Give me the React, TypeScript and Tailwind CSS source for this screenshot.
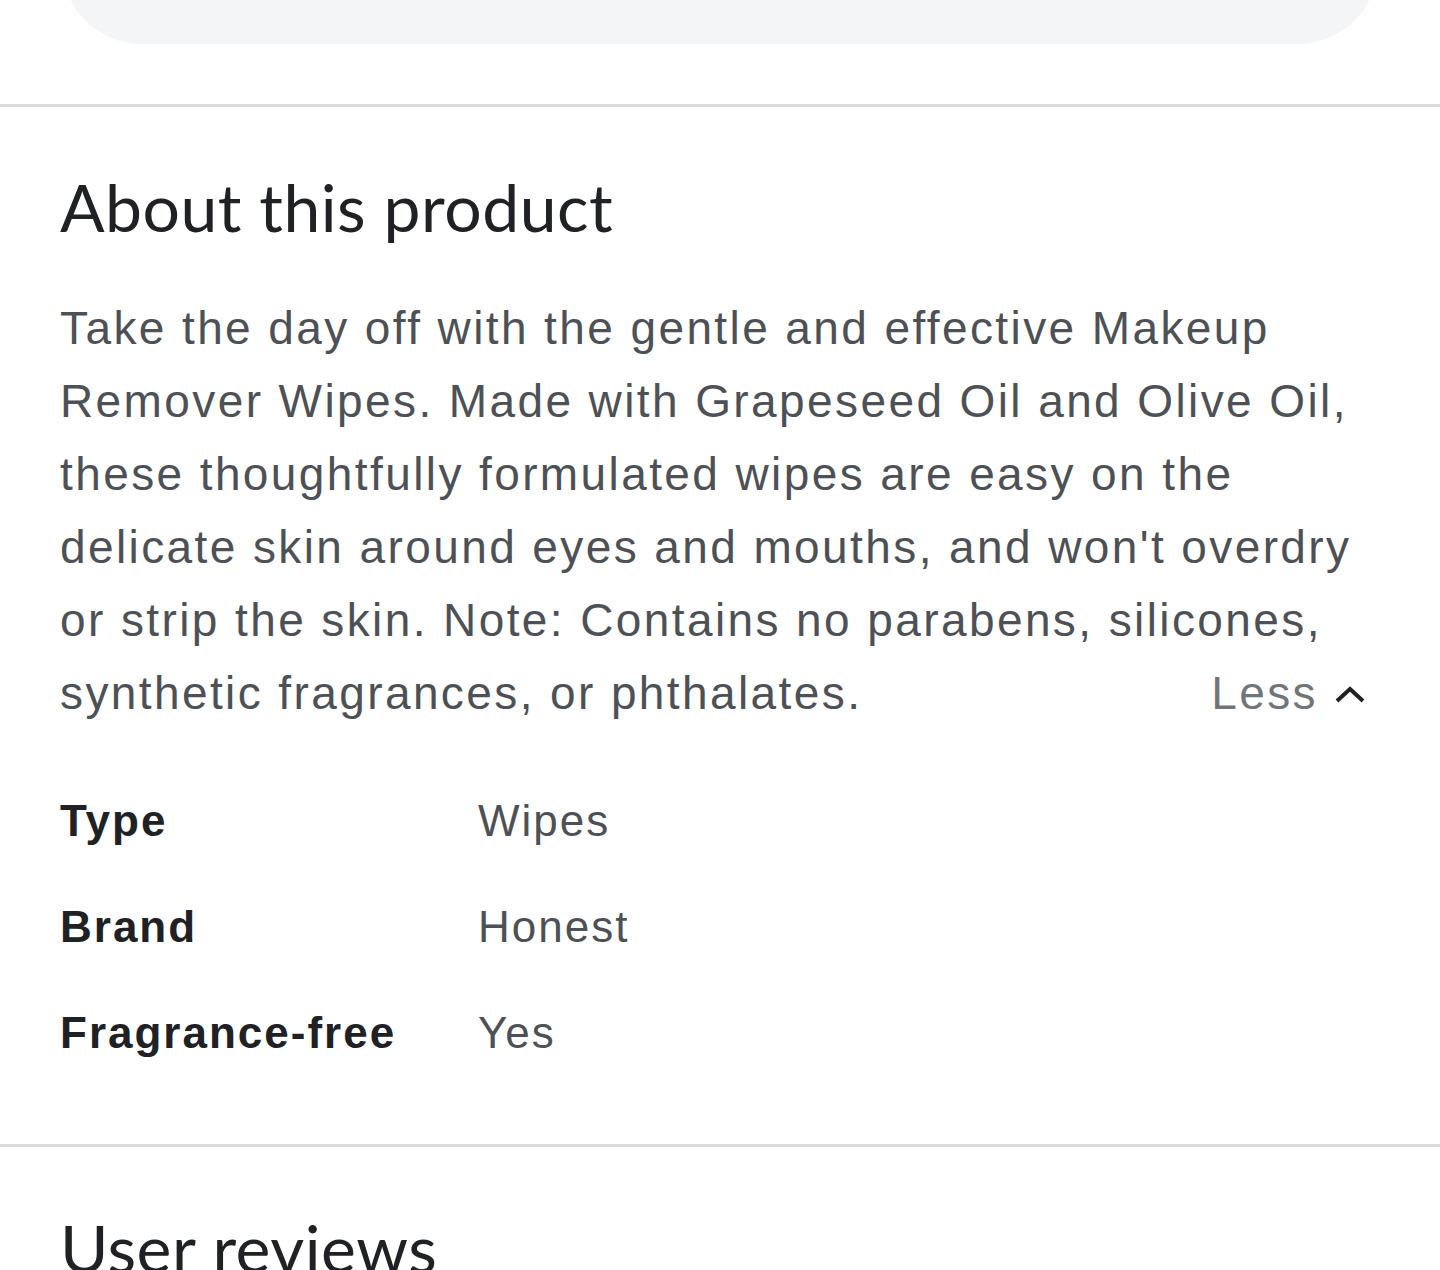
import React from "react";

const sans = { fontFamily: '"Liberation Sans", Arial, sans-serif' };

export default function App() {
  return (
    <div className="w-[1440px] h-[1270px] overflow-hidden bg-white" style={sans}>
      <div className="mx-[62px] mt-[-156px] h-[200px] rounded-[80px] bg-[#f4f5f7]" />
      <div className="mt-[60px] h-[3px] bg-[#dcdce0]" />
      <section className="px-[60px]">
        <h2 className="mt-[60px] text-[66px] leading-[80px] text-[#202124] tracking-[0.5px] [font-family:Lato,sans-serif]">
          About this product
        </h2>
        <div className="relative mt-[45px] text-[46px] leading-[73px] text-[#4d5156] tracking-[2.4px]">
          <p>
            Take the day off with the gentle and effective Makeup
            <br />
            Remover Wipes. Made with Grapeseed Oil and Olive Oil,
            <br />
            these thoughtfully formulated wipes are easy on the
            <br />
            delicate skin around eyes and mouths, and won't overdry
            <br />
            or strip the skin. Note: Contains no parabens, silicones,
            <br />
            synthetic fragrances, or phthalates.
          </p>
          <div className="absolute right-[14px] bottom-0 flex items-center gap-[16px]">
            <span className="text-[#70757a]">Less</span>
            <svg width="32" height="20" viewBox="0 0 32 20" fill="none">
              <path d="M3 17 L16 5 L29 17" stroke="#202124" strokeWidth="4" />
            </svg>
          </div>
        </div>
        <div className="mt-[61px] grid grid-cols-[418px_1fr] gap-y-[46px] text-[44px] leading-[60px] tracking-[2px]">
          <div className="font-bold text-[#202124]">Type</div>
          <div className="text-[#4d5156]">Wipes</div>
          <div className="font-bold text-[#202124]">Brand</div>
          <div className="text-[#4d5156]">Honest</div>
          <div className="font-bold text-[#202124]">Fragrance-free</div>
          <div className="text-[#4d5156]">Yes</div>
        </div>
      </section>
      <div className="mt-[81px] h-[3px] bg-[#dcdce0]" />
      <section className="px-[60px]">
        <h2 className="mt-[61px] text-[66px] leading-[80px] text-[#202124] tracking-[0.5px] [font-family:Lato,sans-serif]">
          User reviews
        </h2>
      </section>
    </div>
  );
}
